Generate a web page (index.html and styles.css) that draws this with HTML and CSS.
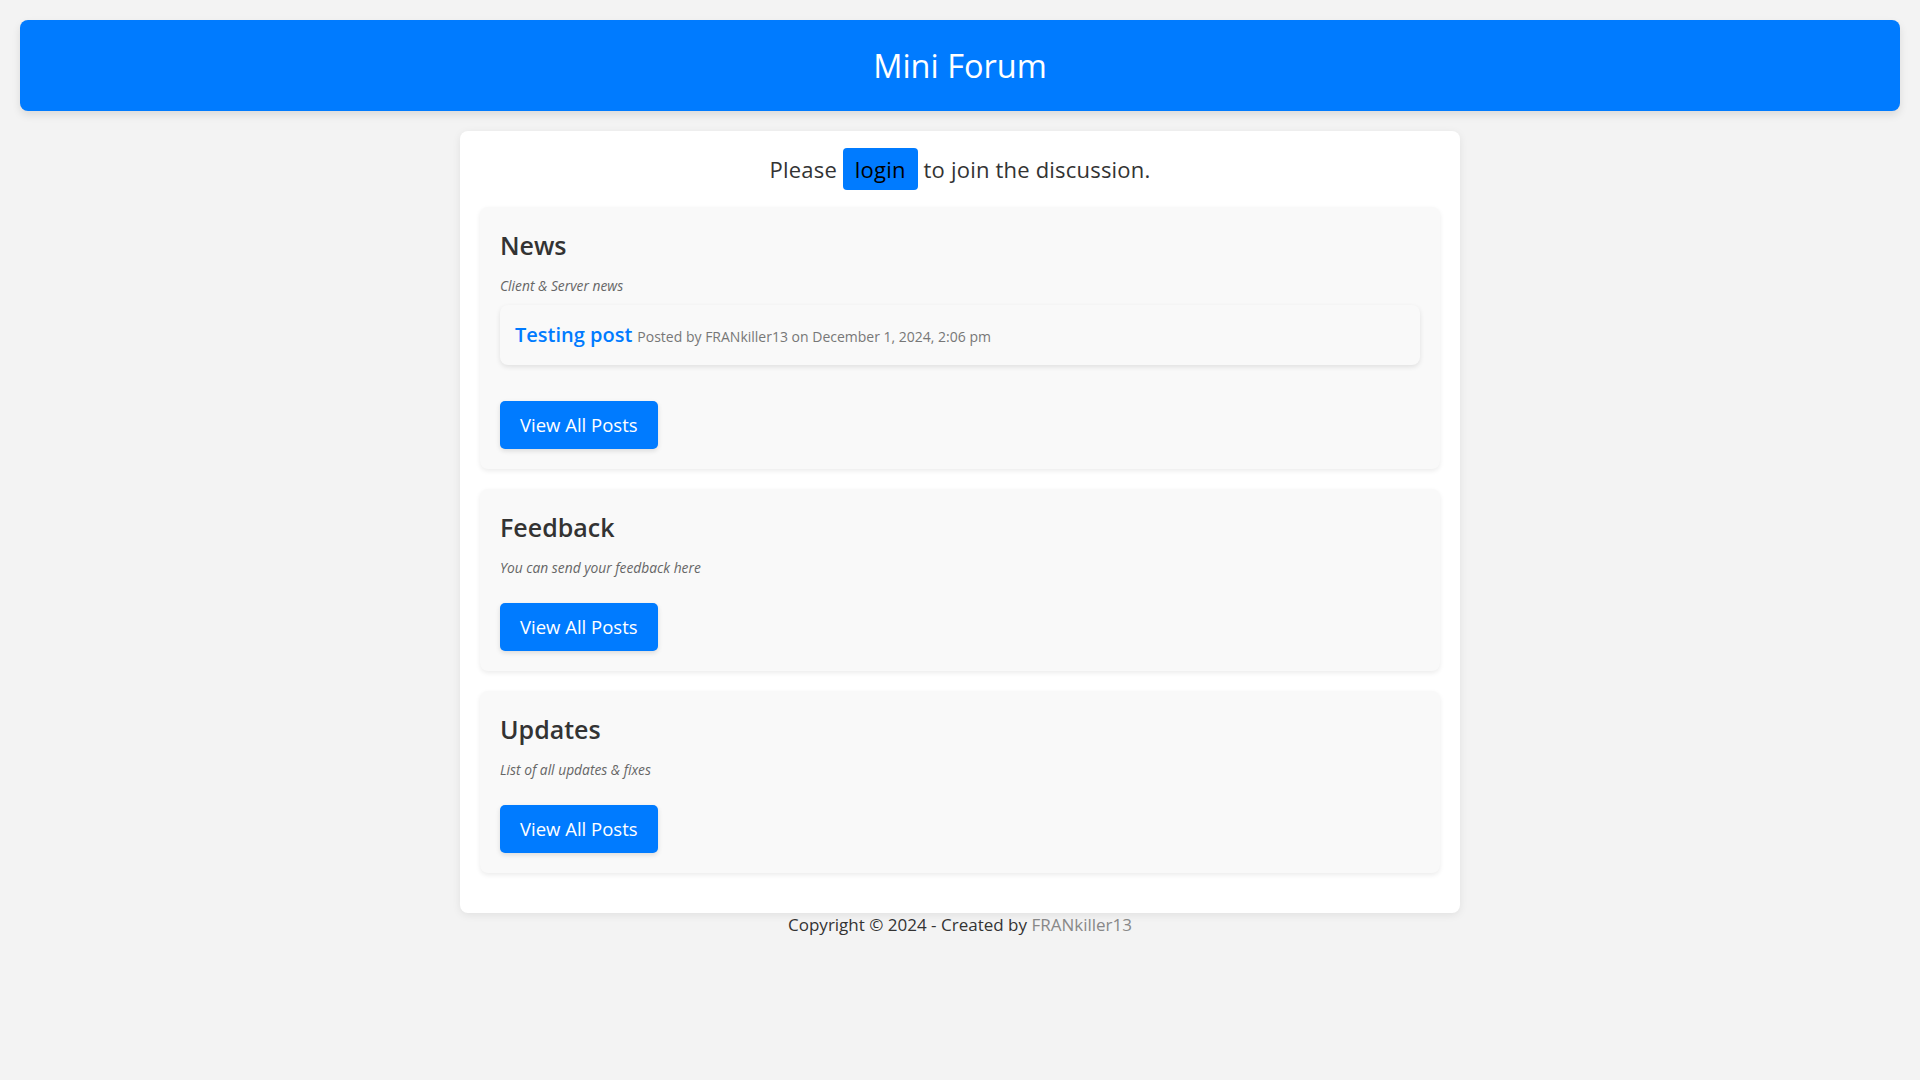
FILE: index.html
```html
<!DOCTYPE html>
<html lang="en">
<head>
<meta charset="utf-8">
<title>Mini Forum</title>
<link rel="stylesheet" href="styles.css">
</head>
<body>
<header class="site-header">
  <h1 class="site-title">Mini Forum</h1>
</header>
<main class="container">
  <p class="intro">Please <a class="login" href="#">login</a> to join the discussion.</p>

  <section class="category">
    <h2 class="cat-title">News</h2>
    <p class="cat-desc">Client &amp; Server news</p>
    <div class="posts">
      <div class="post">
        <a class="post-title" href="#">Testing post</a>
        <span class="post-meta">Posted by FRANkiller13 on December 1, 2024, 2:06 pm</span>
      </div>
    </div>
    <a class="btn" href="#">View All Posts</a>
  </section>

  <section class="category">
    <h2 class="cat-title">Feedback</h2>
    <p class="cat-desc">You can send your feedback here</p>
    <a class="btn" href="#">View All Posts</a>
  </section>

  <section class="category">
    <h2 class="cat-title">Updates</h2>
    <p class="cat-desc">List of all updates &amp; fixes</p>
    <a class="btn" href="#">View All Posts</a>
  </section>
</main>
<footer class="site-footer">
  Copyright © 2024 - Created by <a class="footer-link" href="#">FRANkiller13</a>
</footer>
</body>
</html>
```
FILE: styles.css
```css
* { box-sizing: border-box; }

body {
  margin: 0;
  background: #f3f3f3;
  font-family: "Open Sans", "Noto Sans", sans-serif;
  color: #333;
}

.site-header {
  margin: 20px 20px 0;
  height: 91px;
  background: #007bff;
  color: #fff;
  border-radius: 8px;
  box-shadow: 0 4px 8px rgba(0, 0, 0, 0.1);
  display: flex;
  align-items: center;
  justify-content: center;
}

.site-title {
  margin: 0;
  font-size: 32.5px;
  font-weight: 400;
  line-height: 1.2;
}

.container {
  width: 1000px;
  margin: 20px auto 0;
  padding: 16px 20px 20px;
  background: #fff;
  border-radius: 8px;
  box-shadow: 0 2px 8px rgba(0, 0, 0, 0.08);
}

.intro {
  margin: 0 0 17px;
  height: 43px;
  display: flex;
  align-items: center;
  justify-content: center;
  font-size: 22px;
  letter-spacing: 0.2px;
  color: #333;
  white-space: pre;
}

.login {
  display: inline-block;
  padding: 0 12px;
  height: 42px;
  line-height: 42px;
  background: #007bff;
  color: #000;
  border-radius: 4px;
  text-decoration: none;
}

.category {
  background: #f9f9f9;
  border-radius: 8px;
  padding: 20px;
  margin-bottom: 20px;
  box-shadow: 0 2px 5px rgba(0, 0, 0, 0.08);
}

.cat-title {
  margin: 4px 0 0;
  font-size: 25px;
  line-height: 29px;
  font-weight: 600;
  color: #333;
}

.cat-desc {
  margin: 17px 0 10px;
  font-size: 13.8px;
  line-height: 18px;
  font-style: italic;
  color: #666;
}

.posts {
  margin-bottom: 20px;
}

.post {
  height: 60px;
  padding: 15px 15px 0;
  display: flex;
  align-items: baseline;
  background: #f9f9f9;
  border-radius: 8px;
  box-shadow: 0 2px 5px rgba(0, 0, 0, 0.1);
}

.post-title {
  font-size: 20px;
  line-height: 30px;
  font-weight: 600;
  color: #007bff;
  text-decoration: none;
}

.post-meta {
  margin-left: 5px;
  font-size: 14px;
  color: #777;
}

.btn {
  display: inline-block;
  margin-top: 16px;
  height: 48px;
  line-height: 48px;
  padding: 0 20px;
  background: #007bff;
  color: #fff;
  font-size: 18.5px;
  font-weight: 500;
  border-radius: 5px;
  text-decoration: none;
  box-shadow: 0 2px 5px rgba(0, 0, 0, 0.12);
}

.site-footer {
  text-align: center;
  font-size: 17px;
  line-height: 24px;
  color: #333;
}

.footer-link {
  color: #888;
  text-decoration: none;
}
```
